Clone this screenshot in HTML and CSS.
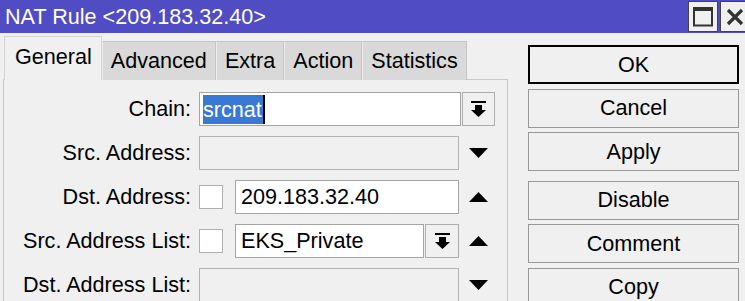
FILE: index.html
```html
<!DOCTYPE html>
<html>
<head>
<title>NAT Rule</title>
<meta charset="UTF-8">
<link rel="stylesheet" href="styles.css">
</head>
<body>
<div class="win">
	<div class="titlebar">
		<span class="title">NAT Rule &lt;209.183.32.40&gt;</span>
		<div class="tbtns">
			<div class="tbtn"><svg width="20" height="20" viewBox="0 0 20 20"><rect x="1" y="1.5" width="18" height="17" fill="none" stroke="#333" stroke-width="2"/><rect x="0" y="0" width="20" height="4" fill="#333"/></svg></div>
			<div class="tbtn"><svg width="18" height="18" viewBox="0 0 18 18"><path d="M2 2 L16 16 M16 2 L2 16" stroke="#333" stroke-width="3.2"/></svg></div>
		</div>
	</div>
	<div class="main">
		<div class="left">
			<div class="tabs">
				<div class="tab sel">General</div>
				<div class="tab">Advanced</div>
				<div class="tab">Extra</div>
				<div class="tab">Action</div>
				<div class="tab">Statistics</div>
			</div>
			<div class="panel">
				<div class="row">
					<label>Chain:</label>
					<div class="field wide"><div class="inp"><span class="hl">srcnat</span><span class="caret"></span></div></div>
					<div class="side"><div class="dd"><svg width="15" height="17" viewBox="0 0 15 17"><rect x="0" y="0" width="15" height="2"/><rect x="4" y="4" width="7" height="5"/><polygon points="0,9 15,9 7.5,16"/></svg></div></div>
				</div>
				<div class="row">
					<label>Src. Address:</label>
					<div class="field"><div class="inp off"></div></div>
					<div class="side"><svg width="19" height="10" viewBox="0 0 19 10"><polygon points="0,0 19,0 9.5,10"/></svg></div>
				</div>
				<div class="row">
					<label>Dst. Address:</label>
					<div class="field"><div class="chk"></div><div class="inp">209.183.32.40</div></div>
					<div class="side"><svg width="19" height="10" viewBox="0 0 19 10"><polygon points="0,10 19,10 9.5,0"/></svg></div>
				</div>
				<div class="row">
					<label>Src. Address List:</label>
					<div class="field"><div class="chk"></div><div class="inp">EKS_Private</div><div class="dd"><svg width="15" height="17" viewBox="0 0 15 17"><rect x="0" y="0" width="15" height="2"/><rect x="4" y="4" width="7" height="5"/><polygon points="0,9 15,9 7.5,16"/></svg></div></div>
					<div class="side"><svg width="19" height="10" viewBox="0 0 19 10"><polygon points="0,10 19,10 9.5,0"/></svg></div>
				</div>
				<div class="row">
					<label>Dst. Address List:</label>
					<div class="field"><div class="inp off"></div></div>
					<div class="side"><svg width="19" height="10" viewBox="0 0 19 10"><polygon points="0,0 19,0 9.5,10"/></svg></div>
				</div>
			</div>
		</div>
		<div class="buttons">
			<div class="btn def">OK</div>
			<div class="btn">Cancel</div>
			<div class="btn">Apply</div>
			<div class="btn gap">Disable</div>
			<div class="btn">Comment</div>
			<div class="btn">Copy</div>
		</div>
	</div>
</div>
</body>
</html>
```

FILE: styles.css
```css
html,body{margin:0;padding:0;}
body{width:745px;height:301px;overflow:hidden;background:#f0f0f0;font-family:"Liberation Sans",Arial,sans-serif;font-size:21.6px;color:#000;}
.titlebar{height:33px;background:#504cc4;display:flex;align-items:center;justify-content:space-between;}
.title{color:#fff;font-size:21.6px;padding-left:5px;padding-top:1px;}
.tbtns{display:flex;align-self:flex-start;margin-top:1px;gap:2px;margin-right:-5px;}
.tbtn{width:30px;height:31px;background:#f0f0f0;border:1px solid #444;display:flex;align-items:center;justify-content:center;box-sizing:border-box;}
.main{display:flex;height:268px;overflow:hidden;}
.left{margin-left:3px;width:505px;}
.tabs{display:flex;align-items:flex-end;height:44px;margin-top:3px;padding-left:1px;position:relative;z-index:1;}
.tab{height:39px;box-sizing:border-box;background:#d9d9d9;border:1px solid #c6c6c6;border-bottom:none;border-left-color:#ececec;display:flex;align-items:center;padding:0 8px 0 8px;}
.tab.sel{height:44px;background:#f0f0f0;border-color:#d4d4d4;padding:0 9px 4px 10px;}
.panel{border:1px solid #c8c8c8;border-bottom:none;margin-top:-1px;height:240px;padding-top:12px;box-sizing:border-box;}
.row{display:flex;align-items:center;height:34px;margin-bottom:10px;}
.row label{width:187px;text-align:right;margin-right:8px;white-space:nowrap;}
.field{width:260px;display:flex;height:34px;align-items:center;}
.field.wide{width:262px;}
.side{width:33px;margin-left:3px;display:flex;justify-content:center;align-items:center;height:34px;}
.field.wide + .side{margin-left:1px;}
.inp{flex:1;height:34px;box-sizing:border-box;border:1px solid #a5a5a5;background:#fff;display:flex;align-items:center;padding-left:5px;white-space:nowrap;overflow:hidden;}
.inp.off{background:#f0f0f0;border-color:#b4b4b4;}
.hl{background:#3a78d6;color:#fff;line-height:29px;padding:0 1px 0 0;margin-left:-2px;}
.caret{display:inline-block;width:2px;height:29px;background:#000;}
.chk{width:24px;height:24px;box-sizing:border-box;border:1px solid #b0b0b0;background:#fff;margin-right:12px;}
.dd{width:34px;height:34px;box-sizing:border-box;border:1px solid #adadad;background:#f0f0f0;display:flex;align-items:center;justify-content:center;}
.field .dd{margin-left:1px;}
.buttons{margin-left:20px;width:211px;margin-top:12px;display:flex;flex-direction:column;}
.btn{height:39px;flex:none;box-sizing:border-box;border:1px solid #999;background:#f0f0f0;display:flex;align-items:center;justify-content:center;margin-bottom:4.5px;}
.btn.def{border:2px solid #000;}
.btn.gap{margin-top:5px;}
```
